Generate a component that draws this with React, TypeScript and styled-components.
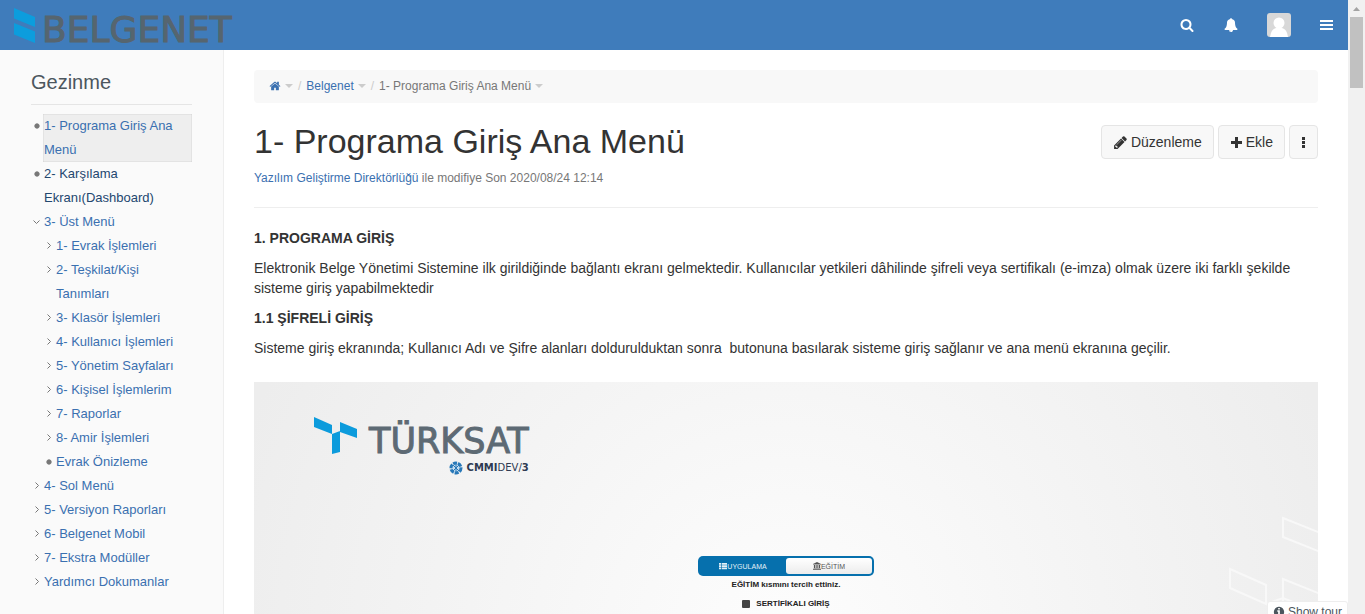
import React from 'react';
import styled, { createGlobalStyle, css } from 'styled-components';

const GlobalStyle = createGlobalStyle`
  *, *::before, *::after { box-sizing: border-box; }
  body {
    margin: 0;
    background: #fff;
    color: #333;
    font: 14px/20px "Liberation Sans", Arial, sans-serif;
  }
  a { color: #3a70b0; text-decoration: none; }
  button { font-family: inherit; cursor: pointer; }
`;

const Shell = styled.div`
  position: relative;
  display: grid;
  grid-template-columns: minmax(0, 1fr) 17px;
  height: 100vh;
  overflow: hidden;
`;

const Page = styled.div`
  display: flex;
  flex-direction: column;
  min-width: 0;
  overflow: hidden;
`;

const ScrollTrack = styled.div`
  display: flex;
  flex-direction: column;
  align-items: center;
  background: #f1f1f1;
`;

const ScrollArrow = styled.svg`
  width: 17px;
  height: 17px;
  fill: #a3a3a3;
`;

const ScrollThumb = styled.div`
  width: 13px;
  height: 71px;
  background: #c1c1c1;
`;

const Header = styled.header`
  display: flex;
  flex: none;
  align-items: center;
  justify-content: space-between;
  height: 50px;
  padding: 0 13px;
  background: #3f7cbb;
`;

const Brand = styled.a`
  display: flex;
  align-items: center;
  gap: 7px;
  height: 50px;
`;

const BrandMark = styled.svg`
  width: 22px;
  height: 36px;
`;

const BrandName = styled.span`
  padding-top: 10px;
  color: #56656f;
  font: 36px/40px "DejaVu Sans", sans-serif;
  -webkit-text-stroke: 1px #56656f;
`;

const Tools = styled.nav`
  display: flex;
  align-items: center;
  gap: 28px;
`;

const IconButton = styled.button`
  display: flex;
  align-items: center;
  justify-content: center;
  min-width: 16px;
  height: 24px;
  padding: 0;
  border: 0;
  background: none;
  color: #fff;
`;

const Glyph = styled.svg<{ $size: number }>`
  flex: none;
  width: ${(p) => p.$size}px;
  height: ${(p) => p.$size}px;
  fill: currentColor;
`;

const Columns = styled.div`
  display: flex;
  flex: 1;
  min-height: 0;
`;

const Sidebar = styled.aside`
  flex: 0 0 224px;
  padding: 20px 31px;
  border-right: 1px solid #eee;
  background: #fafafa;
`;

const SidebarTitle = styled.h2`
  margin: 0 0 9px;
  padding-bottom: 10px;
  border-bottom: 1px solid #e5e5e5;
  color: #4c565e;
  font-size: 20px;
  font-weight: 400;
  line-height: 24px;
`;

const Tree = styled.ul`
  margin: 0;
  padding: 0;
  list-style: none;
  font-size: 13px;
  line-height: 24px;

  & & { padding-left: 12px; }
`;

const TreeRow = styled.div`
  display: flex;
  align-items: flex-start;
`;

const TreeMark = styled.svg`
  flex: none;
  width: 12px;
  height: 24px;
  fill: #777;
  stroke: #777;
`;

const TreeLink = styled.a<{ $active?: boolean; $dark?: boolean }>`
  flex: 1;
  padding-left: 1px;
  ${(p) => p.$dark && css`color: #23476f;`}
  ${(p) => p.$active && css`
    background: #eee;
    box-shadow: inset 0 0 1px #888;
  `}
`;

const Main = styled.main`
  flex: 1;
  min-width: 0;
  padding: 20px 30px;
`;

const Breadcrumb = styled.ol`
  display: flex;
  align-items: center;
  margin: 0;
  padding: 6px 15px 7px;
  border-radius: 4px;
  background: #f8f8f8;
  color: #777;
  font-size: 12px;
  list-style: none;
`;

const Crumb = styled.li`
  display: flex;
  align-items: center;

  & + &::before {
    content: "/";
    padding: 0 5px;
    color: #ccc;
  }
`;

const HomeLink = styled.a`
  display: flex;
`;

const Caret = styled.span`
  margin-left: 4px;
  border: 4px solid transparent;
  border-top-color: #ccc;
  border-bottom: 0;
`;

const TitleRow = styled.div`
  display: flex;
  align-items: flex-start;
  justify-content: space-between;
  margin-top: 18px;
`;

const Title = styled.h1`
  margin: 0;
  font-size: 34px;
  font-weight: 400;
  line-height: 40px;
`;

const Actions = styled.div`
  display: flex;
  gap: 4px;
  padding-top: 4px;
`;

const ActionButton = styled.button<{ $compact?: boolean }>`
  display: flex;
  align-items: center;
  gap: 3px;
  height: 34px;
  padding: 0 ${(p) => (p.$compact ? 7 : 11)}px;
  border: 1px solid #e5e5e5;
  border-radius: 4px;
  background: #f8f8f8;
  color: #333;
  font-size: 14px;
`;

const Meta = styled.p`
  margin: 7px 0 0;
  padding-bottom: 19px;
  border-bottom: 1px solid #eee;
  color: #777;
  font-size: 12px;
`;

const Article = styled.article`
  padding-top: 20px;
`;

const SectionTitle = styled.h3`
  margin: 0 0 10px;
  font-size: 14px;
  font-weight: 700;
`;

const Paragraph = styled.p`
  margin: 0 0 10px;
`;

const LoginScreen = styled.figure`
  position: relative;
  display: flex;
  flex-direction: column;
  min-height: 500px;
  margin: 24px 0 0;
  padding: 34px 60px;
  overflow: hidden;
  background: radial-gradient(circle 580px at 50% 260px, #fdfdfd 0%, #f9f9f9 25%, #f4f4f4 55%, #ededed 100%);
  font-family: "Liberation Sans", Arial, sans-serif;
`;

const Watermark = styled.svg`
  position: absolute;
  top: 130px;
  right: 0;
  width: 110px;
  height: 150px;
  fill: none;
  stroke: #f8f8f8;
  stroke-width: 2;
`;

const Vendor = styled.div`
  display: flex;
  align-items: flex-start;
  gap: 11px;
`;

const VendorMark = styled.svg`
  width: 44px;
  height: 40px;
  fill: #0c9bdc;
`;

const VendorText = styled.div`
  display: flex;
  flex-direction: column;
`;

const VendorName = styled.span`
  padding-top: 5px;
  color: #5d6a74;
  font: 35px/40px "DejaVu Sans", sans-serif;
  -webkit-text-stroke: 1px #5d6a74;
`;

const Certificate = styled.span`
  display: flex;
  align-items: center;
  align-self: flex-end;
  gap: 4px;
  color: #2e3a52;
  font: 10px/12px "DejaVu Sans", sans-serif;
`;

const LoginBox = styled.div`
  display: flex;
  flex-direction: column;
  align-items: center;
  align-self: center;
  width: 176px;
  margin-top: 81px;
  color: #222;
  font-size: 8px;
  font-weight: 700;
  line-height: 10px;
`;

const Switcher = styled.div`
  display: flex;
  width: 100%;
  height: 20px;
  padding: 2px;
  border-radius: 5px;
  background: #0670ad;
`;

const SwitchButton = styled.button<{ $on?: boolean }>`
  display: flex;
  flex: 1;
  align-items: center;
  justify-content: center;
  padding: 0;
  border: 0;
  border-radius: 3px;
  background: ${(p) => (p.$on ? 'linear-gradient(#fff, #ececec)' : 'none')};
  color: ${(p) => (p.$on ? '#555' : '#e4f0f7')};
  font-size: 7px;
`;

const Notice = styled.p`
  margin: 4px 0 9px;
`;

const CheckLabel = styled.label`
  display: flex;
  align-items: center;
  gap: 6px;
`;

const Checkbox = styled.input`
  width: 8px;
  height: 8px;
  margin: 0;
  border-radius: 1px;
  background: #444;
  appearance: none;
`;

const TourButton = styled.button`
  position: absolute;
  right: 17px;
  bottom: -8px;
  display: flex;
  align-items: center;
  gap: 3px;
  height: 21px;
  padding: 0 5px;
  border: 1px solid #eee;
  border-radius: 3px 3px 0 0;
  background: #fff;
  color: #4c565e;
  font-size: 12px;
`;

const ICONS = {
  search:
    'M1216 832q0-185-131.5-316.5t-316.5-131.5-316.5 131.5-131.5 316.5 131.5 316.5 316.5 131.5 316.5-131.5 131.5-316.5zm512 832q0 52-38 90t-90 38q-54 0-90-38l-343-342q-179 124-399 124-143 0-273.5-55.5t-225-150-150-225-55.5-273.5 55.5-273.5 150-225 225-150 273.5-55.5 273.5 55.5 225 150 150 225 55.5 273.5q0 220-124 399l343 343q37 37 37 90z',
  bell:
    'M912 1696q0-16-16-16-59 0-101.5-42.5t-42.5-101.5q0-16-16-16t-16 16q0 73 51.5 124.5t124.5 51.5q16 0 16-16zm816-288q0 52-38 90t-90 38h-448q0 106-75 181t-181 75-181-75-75-181h-448q-52 0-90-38t-38-90q50-42 91-88t85-119.5 74.5-158.5 50-206 19.5-260q0-152 117-282.5t307-158.5q-8-19-8-39 0-40 28-68t68-28 68 28 28 68q0 20-8 39 190 28 307 158.5t117 282.5q0 139 19.5 260t50 206 74.5 158.5 85 119.5 91 88z',
  bars: 'M0 256h1664v256H0zM0 768h1664v256H0zM0 1280h1664v256H0z',
  home:
    'M1472 992v480q0 26-19 45t-45 19h-384v-384h-256v384h-384q-26 0-45-19t-19-45v-480q0-1 .5-3t.5-3l575-474 575 474q1 2 1 6zm223-69l-62 74q-8 9-21 11h-3q-13 0-21-7l-692-577-692 577q-12 8-24 7-13-2-21-11l-62-74q-8-10-7-23.5t11-21.5l719-599q32-26 76-26t76 26l244 204v-195q0-14 9-23t23-9h192q14 0 23 9t9 23v408l219 182q10 8 11 21.5t-7 23.5z',
  pencil:
    'M491 1536l91-91-235-235-91 91v107h128v128h107zm523-928q0-22-22-22-10 0-17 7l-542 542q-7 7-7 17 0 22 22 22 10 0 17-7l542-542q7-7 7-17zm-54-192l416 416-832 832h-416v-416zm683 96q0 53-37 90l-166 166-416-416 166-165q36-38 90-38 53 0 91 38l235 234q37 39 37 91z',
  plus: 'M690 138h412v552h552v412h-552v552h-412v-552h-552v-412h552z',
  more: 'M690 138h414v414H690zM690 690h414v414H690zM690 1242h414v414H690z',
  info:
    'M1152 1376v-160q0-14-9-23t-23-9h-96v-512q0-14-9-23t-23-9h-320q-14 0-23 9t-9 23v160q0 14 9 23t23 9h96v320h-96q-14 0-23 9t-9 23v160q0 14 9 23t23 9h448q14 0 23-9t9-23zm-128-896v-160q0-14-9-23t-23-9h-192q-14 0-23 9t-9 23v160q0 14 9 23t23 9h192q14 0 23-9t9-23zm640 416q0 209-103 385.5t-279.5 279.5-385.5 103-385.5-103-279.5-279.5-103-385.5 103-385.5 279.5-279.5 385.5-103 385.5 103 279.5 279.5 103 385.5z',
  list: 'M0 224h448v400H0zM600 224h1192v400H600zM0 720h448v400H0zM600 720h1192v400H600zM0 1216h448v400H0zM600 1216h1192v400H600z',
  bank: 'M896 0L1792 450V570H0V450zM200 660h260v700H200zM600 660h220v700H600zM970 660h220v700H970zM1330 660h260v700h-260zM100 1400h1592v120H100zM0 1570h1792v160H0z',
};

function Icon({ name, size }: { name: keyof typeof ICONS; size: number }) {
  return (
    <Glyph $size={size} viewBox="0 0 1792 1792" aria-hidden="true">
      <path d={ICONS[name]} />
    </Glyph>
  );
}

type Mark = 'leaf' | 'closed' | 'open';

interface Node {
  label: string;
  mark: Mark;
  active?: boolean;
  dark?: boolean;
  children?: Node[];
}

const TREE: Node[] = [
  { label: '1- Programa Giriş Ana Menü', mark: 'leaf', active: true },
  { label: '2- Karşılama Ekranı(Dashboard)', mark: 'leaf', dark: true },
  {
    label: '3- Üst Menü',
    mark: 'open',
    children: [
      { label: '1- Evrak İşlemleri', mark: 'closed' },
      { label: '2- Teşkilat/Kişi Tanımları', mark: 'closed' },
      { label: '3- Klasör İşlemleri', mark: 'closed' },
      { label: '4- Kullanıcı İşlemleri', mark: 'closed' },
      { label: '5- Yönetim Sayfaları', mark: 'closed' },
      { label: '6- Kişisel İşlemlerim', mark: 'closed' },
      { label: '7- Raporlar', mark: 'closed' },
      { label: '8- Amir İşlemleri', mark: 'closed' },
      { label: 'Evrak Önizleme', mark: 'leaf' },
    ],
  },
  { label: '4- Sol Menü', mark: 'closed' },
  { label: '5- Versiyon Raporları', mark: 'closed' },
  { label: '6- Belgenet Mobil', mark: 'closed' },
  { label: '7- Ekstra Modüller', mark: 'closed' },
  { label: 'Yardımcı Dokumanlar', mark: 'closed' },
];

function NodeMark({ mark }: { mark: Mark }) {
  return (
    <TreeMark viewBox="0 0 12 24" aria-hidden="true">
      {mark === 'leaf' && <circle cx="6" cy="12" r="2.2" />}
      {mark === 'closed' && <path d="M4.5 8.5L7.500 11.500L4.5 14.5" fill="none" />}
      {mark === 'open' && <path d="M2.5 10.5L5.500 13.500L8.5 10.5" fill="none" />}
    </TreeMark>
  );
}

function TreeList({ nodes }: { nodes: Node[] }) {
  return (
    <Tree>
      {nodes.map((n) => (
        <li key={n.label}>
          <TreeRow>
            <NodeMark mark={n.mark} />
            <TreeLink href="#" $active={n.active} $dark={n.dark}>{n.label}</TreeLink>
          </TreeRow>
          {n.children && <TreeList nodes={n.children} />}
        </li>
      ))}
    </Tree>
  );
}

export default function App() {
  return (
    <>
      <GlobalStyle />
      <Shell>
        <Page>
          <Header>
            <Brand href="#">
              <BrandMark viewBox="0 0 22 36" aria-hidden="true">
                <path d="M1 1L22 10V20L1 11.500ZM1 16L22 24.500V36L1 27.500Z" fill="#0c9ddd" />
              </BrandMark>
              <BrandName>BELGENET</BrandName>
            </Brand>
            <Tools>
              <IconButton aria-label="Ara"><Icon name="search" size={14} /></IconButton>
              <IconButton aria-label="Bildirimler"><Icon name="bell" size={14} /></IconButton>
              <IconButton aria-label="Profil">
                <svg width="24" height="24" viewBox="0 0 24 24">
                  <rect width="24" height="24" rx="3" fill="#d8d8d8" />
                  <circle cx="12" cy="10" r="5.500" fill="#fff" />
                  <path d="M3 24Q4 16 9 15H15Q20 16 21 24Z" fill="#fff" />
                </svg>
              </IconButton>
              <IconButton aria-label="Menü"><Icon name="bars" size={14} /></IconButton>
            </Tools>
          </Header>
          <Columns>
            <Sidebar>
              <SidebarTitle>Gezinme</SidebarTitle>
              <TreeList nodes={TREE} />
            </Sidebar>
            <Main>
              <Breadcrumb>
                <Crumb><HomeLink href="#" aria-label="Ana sayfa"><Icon name="home" size={12} /></HomeLink><Caret /></Crumb>
                <Crumb><a href="#">Belgenet</a><Caret /></Crumb>
                <Crumb>1- Programa Giriş Ana Menü<Caret /></Crumb>
              </Breadcrumb>
              <TitleRow>
                <Title>1- Programa Giriş Ana Menü</Title>
                <Actions>
                  <ActionButton><Icon name="pencil" size={15} />Düzenleme</ActionButton>
                  <ActionButton><Icon name="plus" size={13} />Ekle</ActionButton>
                  <ActionButton $compact aria-label="Diğer"><Icon name="more" size={13} /></ActionButton>
                </Actions>
              </TitleRow>
              <Meta><a href="#">Yazılım Geliştirme Direktörlüğü</a> ile modifiye Son 2020/08/24 12:14</Meta>
              <Article>
                <SectionTitle>1. PROGRAMA GİRİŞ</SectionTitle>
                <Paragraph>
                  Elektronik Belge Yönetimi Sistemine ilk girildiğinde bağlantı ekranı gelmektedir. Kullanıcılar
                  yetkileri dâhilinde şifreli veya sertifikalı (e-imza) olmak üzere iki farklı şekilde sisteme giriş
                  yapabilmektedir
                </Paragraph>
                <SectionTitle>1.1 ŞİFRELİ GİRİŞ</SectionTitle>
                <Paragraph>
                  Sisteme giriş ekranında; Kullanıcı Adı ve Şifre alanları doldurulduktan sonra{'\u00a0'} butonuna
                  basılarak sisteme giriş sağlanır ve ana menü ekranına geçilir.
                </Paragraph>
                <LoginScreen>
                  <Watermark viewBox="0 0 110 150" aria-hidden="true">
                    <path d="M75 6L120 24V43L75 25ZM22 57L58 73V92L22 76ZM75 67L120 85V110L75 92ZM58 92L75 86L95 94" />
                  </Watermark>
                  <Vendor>
                    <VendorMark viewBox="0 0 44 40" aria-hidden="true">
                      <path d="M0 1L18 9V18L0 11ZM26 6L43 13V22L26 16ZM18 18L26 15V36L18 38Z" />
                    </VendorMark>
                    <VendorText>
                      <VendorName>TÜRKSAT</VendorName>
                      <Certificate>
                        <svg width="14" height="14" viewBox="0 0 14 14" aria-hidden="true">
                          <circle cx="7" cy="7" r="5" fill="#c5dcee" stroke="#2878b8" strokeWidth="3" strokeDasharray="4 1" />
                          <path d="M4 4L10 10M10 4L4 10M7 3V11" stroke="#2878b8" />
                        </svg>
                        <span><b>CMMI</b>DEV/<b>3</b></span>
                      </Certificate>
                    </VendorText>
                  </Vendor>
                  <LoginBox>
                    <Switcher>
                      <SwitchButton><Icon name="list" size={8} />UYGULAMA</SwitchButton>
                      <SwitchButton $on><Icon name="bank" size={8} />EĞİTİM</SwitchButton>
                    </Switcher>
                    <Notice>EĞİTİM kısmını tercih ettiniz.</Notice>
                    <CheckLabel><Checkbox type="checkbox" />SERTİFİKALI GİRİŞ</CheckLabel>
                  </LoginBox>
                </LoginScreen>
              </Article>
            </Main>
          </Columns>
        </Page>
        <ScrollTrack>
          <ScrollArrow viewBox="0 0 17 17" aria-hidden="true"><path d="M5 11L8.500 7L12 11Z" /></ScrollArrow>
          <ScrollThumb />
        </ScrollTrack>
        <TourButton><Icon name="info" size={12} />Show tour</TourButton>
      </Shell>
    </>
  );
}
